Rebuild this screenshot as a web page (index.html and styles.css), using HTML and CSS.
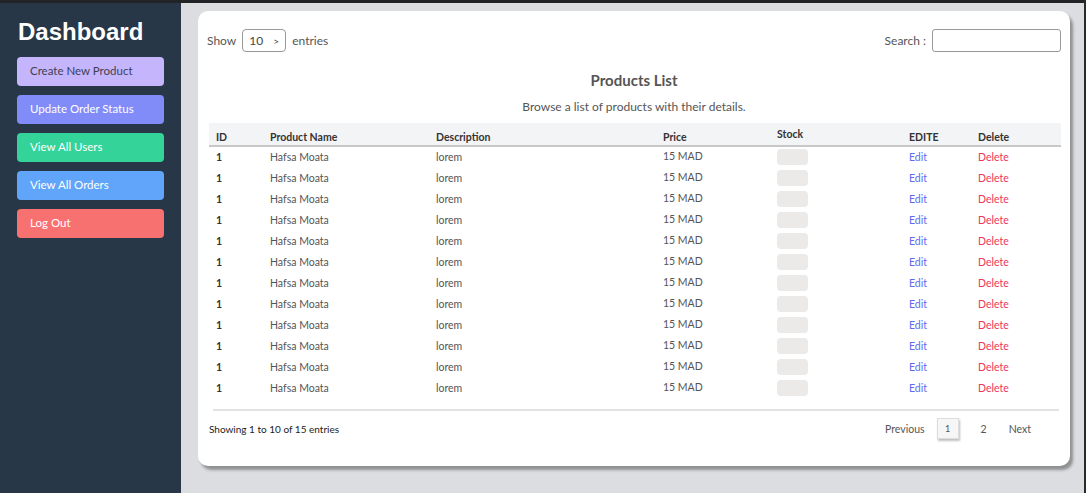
FILE: index.html
```html
<!DOCTYPE html>
<html>
<head>
<meta charset="utf-8">
<link rel="stylesheet" href="styles.css">
</head>
<body>
<div class="topbar"></div>
<div class="layout">
  <aside class="sidebar">
    <h1 class="brand">Dashboard</h1>
    <nav class="menu">
      <a class="btn btn-lavender">Create New Product</a>
      <a class="btn btn-indigo">Update Order Status</a>
      <a class="btn btn-green">View All Users</a>
      <a class="btn btn-blue">View All Orders</a>
      <a class="btn btn-red">Log Out</a>
    </nav>
  </aside>
  <main class="main">
    <section class="card">
      <div class="controls">
        <div class="show">Show <span class="select">10 <span class="chev">&gt;</span></span> entries</div>
        <div class="search">Search : <span class="input"></span></div>
      </div>
      <h2 class="title">Products List</h2>
      <p class="subtitle">Browse a list of products with their details.</p>
      <table class="table">
        <colgroup>
          <col style="width:54px"><col style="width:166px"><col style="width:227px"><col style="width:114px"><col style="width:132px"><col style="width:69px"><col>
        </colgroup>
        <thead>
          <tr><th>ID</th><th>Product Name</th><th>Description</th><th>Price</th><th class="stock-h">Stock</th><th>EDITE</th><th>Delete</th></tr>
        </thead>
        <tbody id="rows"></tbody>
      </table>
      <div class="footer">
        <div class="info">Showing 1 to 10 of 15 entries</div>
        <div class="pager">
          <span class="pg">Previous</span>
          <span class="pg pg-active">1</span>
          <span class="pg">2</span>
          <span class="pg">Next</span>
        </div>
      </div>
    </section>
  </main>
</div>
<script>
  var tb = document.getElementById('rows');
  var html = '';
  for (var i = 0; i < 12; i++) {
    html += '<tr><td class="id">1</td><td>Hafsa Moata</td><td>lorem</td><td class="price">15 MAD</td><td><span class="stock"></span></td><td><a class="edit">Edit</a></td><td><a class="del">Delete</a></td></tr>';
  }
  tb.innerHTML = html;
</script>
</body>
</html>
```
FILE: styles.css
```css
* { box-sizing: border-box; }
html, body { margin: 0; padding: 0; }
body {
  width: 1086px;
  height: 493px;
  overflow: hidden;
  font-family: Lato, "Open Sans", sans-serif;
  background: #dcdde0;
  border-right: 2px solid #2a2a2a;
}
.topbar { height: 3px; background: #222326; }
.layout { display: flex; height: 490px; }
.sidebar {
  width: 181px;
  flex: none;
  background: #283747;
  padding: 14px 17px 0 17px;
}
.brand {
  margin: 0 0 10px 1px;
  font-family: "Liberation Sans", Arial, sans-serif;
  font-size: 24px;
  font-weight: 700;
  color: #fff;
  line-height: 30px;
}
.menu { display: flex; flex-direction: column; gap: 9px; }
.btn {
  display: block;
  height: 29px;
  line-height: 28px;
  padding-left: 13px;
  border-radius: 4px;
  font-size: 11.5px;
  color: #fff;
}
.btn-lavender { background: #c4b5fd; color: #3f3f52; }
.btn-indigo { background: #818cf8; }
.btn-green { background: #34d399; }
.btn-blue { background: #60a5fa; }
.btn-red { background: #f87171; }

.main { flex: 1; padding: 8px 14px 0 17px; }
.card {
  background: #fff;
  border-radius: 10px;
  height: 455px;
  width: 872px;
  box-shadow: 3px 4px 3px rgba(0,0,0,0.35);
  padding: 18px 9px 0 9px;
  color: #444;
}
.controls {
  display: flex;
  justify-content: space-between;
  align-items: center;
  font-size: 12px;
  color: #555;
}
.show { display: flex; align-items: center; gap: 6px; }
.select {
  display: inline-flex;
  align-items: center;
  width: 44px;
  height: 23px;
  border: 1px solid #999;
  border-radius: 4px;
  padding-left: 6px;
  gap: 10px;
  color: #444;
}
.chev { font-size: 10px; }
.search { display: flex; align-items: center; gap: 6px; }
.input {
  display: inline-block;
  width: 129px;
  height: 23px;
  border: 1px solid #999;
  border-radius: 3px;
}
.title {
  margin: 18px 0 0 0;
  text-align: center;
  font-size: 15px;
  font-weight: 700;
  color: #555;
  line-height: 20px;
}
.subtitle {
  margin: 10px 0 0 0;
  text-align: center;
  font-size: 12px;
  color: #555;
  line-height: 14px;
}
.table {
  margin-top: 9px;
  width: 852px;
  margin-left: 2px;
  border-collapse: collapse;
  table-layout: fixed;
  font-size: 10.5px;
}
.table thead tr { background: #f3f4f6; border-bottom: 2px solid #c8c8c8; }
.table th {
  text-align: left;
  font-weight: 700;
  font-size: 10.5px;
  color: #333;
  height: 23px;
  padding: 5px 0 0 7px;
}
.table th.stock-h { padding-top: 0; }
.table td {
  height: 21px;
  padding: 0 0 0 7px;
  color: #555;
  vertical-align: middle;
}
.table td.id { font-weight: 700; color: #333; }
.table td.price { padding-bottom: 2px; }
.stock {
  display: block;
  width: 31px;
  height: 16px;
  background: #ece9e9;
  border-radius: 4px;
}
.edit { color: #5b6cf0; }
.del { color: #f0365a; }
.footer {
  margin: 11px 0 0 6px;
  width: 846px;
  border-top: 2px solid #e2e2e2;
  display: flex;
  justify-content: space-between;
  align-items: center;
  padding-top: 7px;
}
.info { font-size: 10px; color: #222; margin-left: -4px; }
.pager { display: flex; align-items: center; font-size: 10.5px; color: #555; margin-right: 28px; }
.pg { padding: 0; }
.pg-active {
  width: 22px;
  height: 21px;
  line-height: 19px;
  text-align: center;
  margin: 0 22px 0 12px;
  border: 1px solid #ddd;
  background: #f6f6f6;
  box-shadow: 1px 2px 2px rgba(0,0,0,0.25);
  font-size: 9px;
}
.pg-active + .pg { margin-right: 22px; }
```
